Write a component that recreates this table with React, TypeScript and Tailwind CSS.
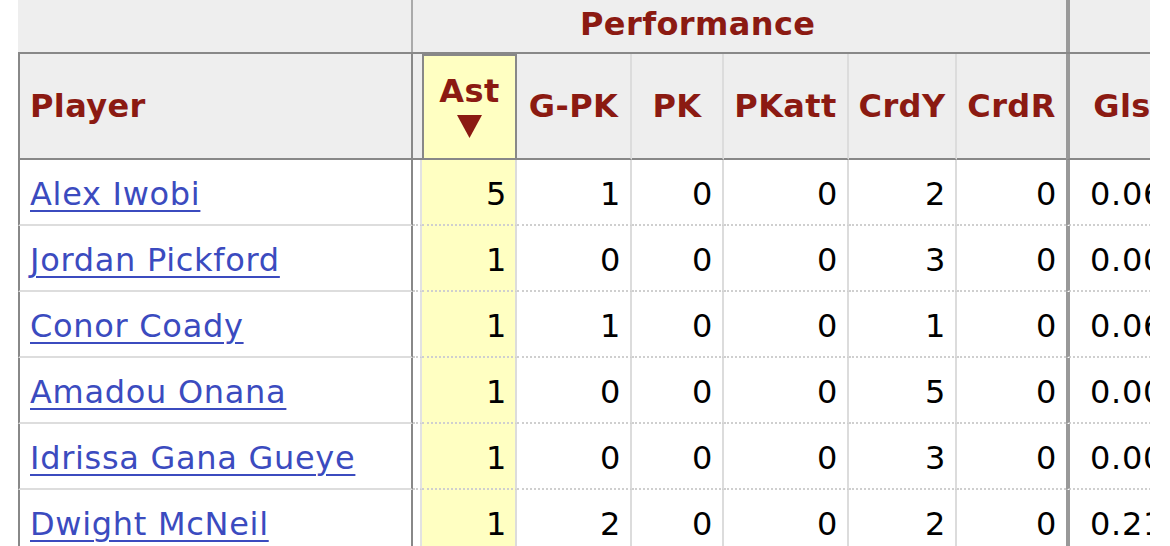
import React from 'react';

const players = [
  { name: 'Alex Iwobi', ast: 5, gpk: 1, pk: 0, pkatt: 0, crdy: 2, crdr: 0, gls: '0.06' },
  { name: 'Jordan Pickford', ast: 1, gpk: 0, pk: 0, pkatt: 0, crdy: 3, crdr: 0, gls: '0.00' },
  { name: 'Conor Coady', ast: 1, gpk: 1, pk: 0, pkatt: 0, crdy: 1, crdr: 0, gls: '0.06' },
  { name: 'Amadou Onana', ast: 1, gpk: 0, pk: 0, pkatt: 0, crdy: 5, crdr: 0, gls: '0.00' },
  { name: 'Idrissa Gana Gueye', ast: 1, gpk: 0, pk: 0, pkatt: 0, crdy: 3, crdr: 0, gls: '0.00' },
  { name: 'Dwight McNeil', ast: 1, gpk: 2, pk: 0, pkatt: 0, crdy: 2, crdr: 0, gls: '0.21' },
];

const statCols = [
  { key: 'gpk', label: 'G-PK', w: 'w-[115px]' },
  { key: 'pk', label: 'PK', w: 'w-[92px]' },
  { key: 'pkatt', label: 'PKatt', w: 'w-[125px]' },
  { key: 'crdy', label: 'CrdY', w: 'w-[108px]' },
] as const;

const head = 'font-bold text-[#8b1a12] tracking-[0.4px]';
const dotted = 'border-b-2 border-b-[#cfcfcf] [border-bottom-style:dotted]';

const App = () => {
  return (
    <div className="w-[1170px] h-[546px] bg-white">
      <div className="w-[1150px] h-[546px] overflow-hidden font-['DejaVu_Sans',Verdana,sans-serif] text-[32px] tracking-[0.7px]">
        <div className="pl-[18px] w-[1200px]">
          {/* Group header */}
          <div className="flex h-[54px] border-b-2 border-b-[#888] bg-[#eeeeee]">
            <div className="w-[395px] shrink-0 border-r-2 border-r-[#aaa]" />
            <div className={`w-[653px] shrink-0 pl-[167px] ${head}`}>Performance</div>
            <div className="w-[120px] shrink-0 border-l-4 border-l-[#999]" />
          </div>

          {/* Column headers */}
          <div className="flex h-[106px] bg-[#eeeeee]">
            <div className={`w-[395px] shrink-0 flex items-center pl-[10px] border-l-2 border-r-2 border-b-2 border-[#888] ${head}`}>
              Player
            </div>
            <div className="w-[9px] shrink-0 border-b-2 border-b-[#888]" />
            <div className={`w-[95px] shrink-0 flex flex-col items-center justify-center bg-[#ffffc2] border-2 border-[#888] ${head}`}>
              <span className="leading-[36px] -mt-[4px]">Ast</span>
              <svg width="25" height="23" viewBox="0 0 25 23" className="mt-[6px]">
                <polygon points="0,0 25,0 12.5,23" fill="#8b1a12" />
              </svg>
            </div>
            {statCols.map((c) => (
              <div
                key={c.key}
                className={`${c.w} shrink-0 flex items-center justify-center border-r-2 border-r-[#dcdcdc] border-b-2 border-b-[#888] ${head}`}
              >
                {c.label}
              </div>
            ))}
            <div className={`w-[109px] shrink-0 flex items-center justify-center border-b-2 border-b-[#888] ${head}`}>
              CrdR
            </div>
            <div className={`w-[108px] shrink-0 flex items-center justify-center border-l-4 border-l-[#999] border-b-2 border-b-[#888] ${head}`}>
              Gls
            </div>
          </div>

          {/* Rows */}
          {players.map((p) => (
            <div key={p.name} className="flex h-[66px] text-black">
              <div className="w-[395px] shrink-0 flex items-center pt-[3px] pl-[10px] border-l-2 border-r-2 border-x-[#888] border-b-2 border-b-[#dddddd]">
                <a href="#" className="text-[#3b4bbf] underline decoration-2 underline-offset-[5px]">
                  {p.name}
                </a>
              </div>
              <div className={`w-[9px] shrink-0 border-r-2 border-r-[#e2e2e2] ${dotted}`} />
              <div className={`w-[95px] shrink-0 flex items-center justify-end pt-[3px] pr-[8px] bg-[#ffffc2] border-r-2 border-r-[#dcdcdc] ${dotted}`}>
                {p.ast}
              </div>
              {statCols.map((c) => (
                <div
                  key={c.key}
                  className={`${c.w} shrink-0 flex items-center justify-end pt-[3px] pr-[9px] border-r-2 border-r-[#dcdcdc] ${dotted}`}
                >
                  {p[c.key]}
                </div>
              ))}
              <div className={`w-[109px] shrink-0 flex items-center justify-end pt-[3px] pr-[9px] ${dotted}`}>{p.crdr}</div>
              <div className={`w-[120px] shrink-0 flex items-center justify-start pt-[3px] pl-[20px] border-l-4 border-l-[#999] ${dotted}`}>
                {p.gls}
              </div>
            </div>
          ))}
        </div>
      </div>
    </div>
  );
};

export default App;
